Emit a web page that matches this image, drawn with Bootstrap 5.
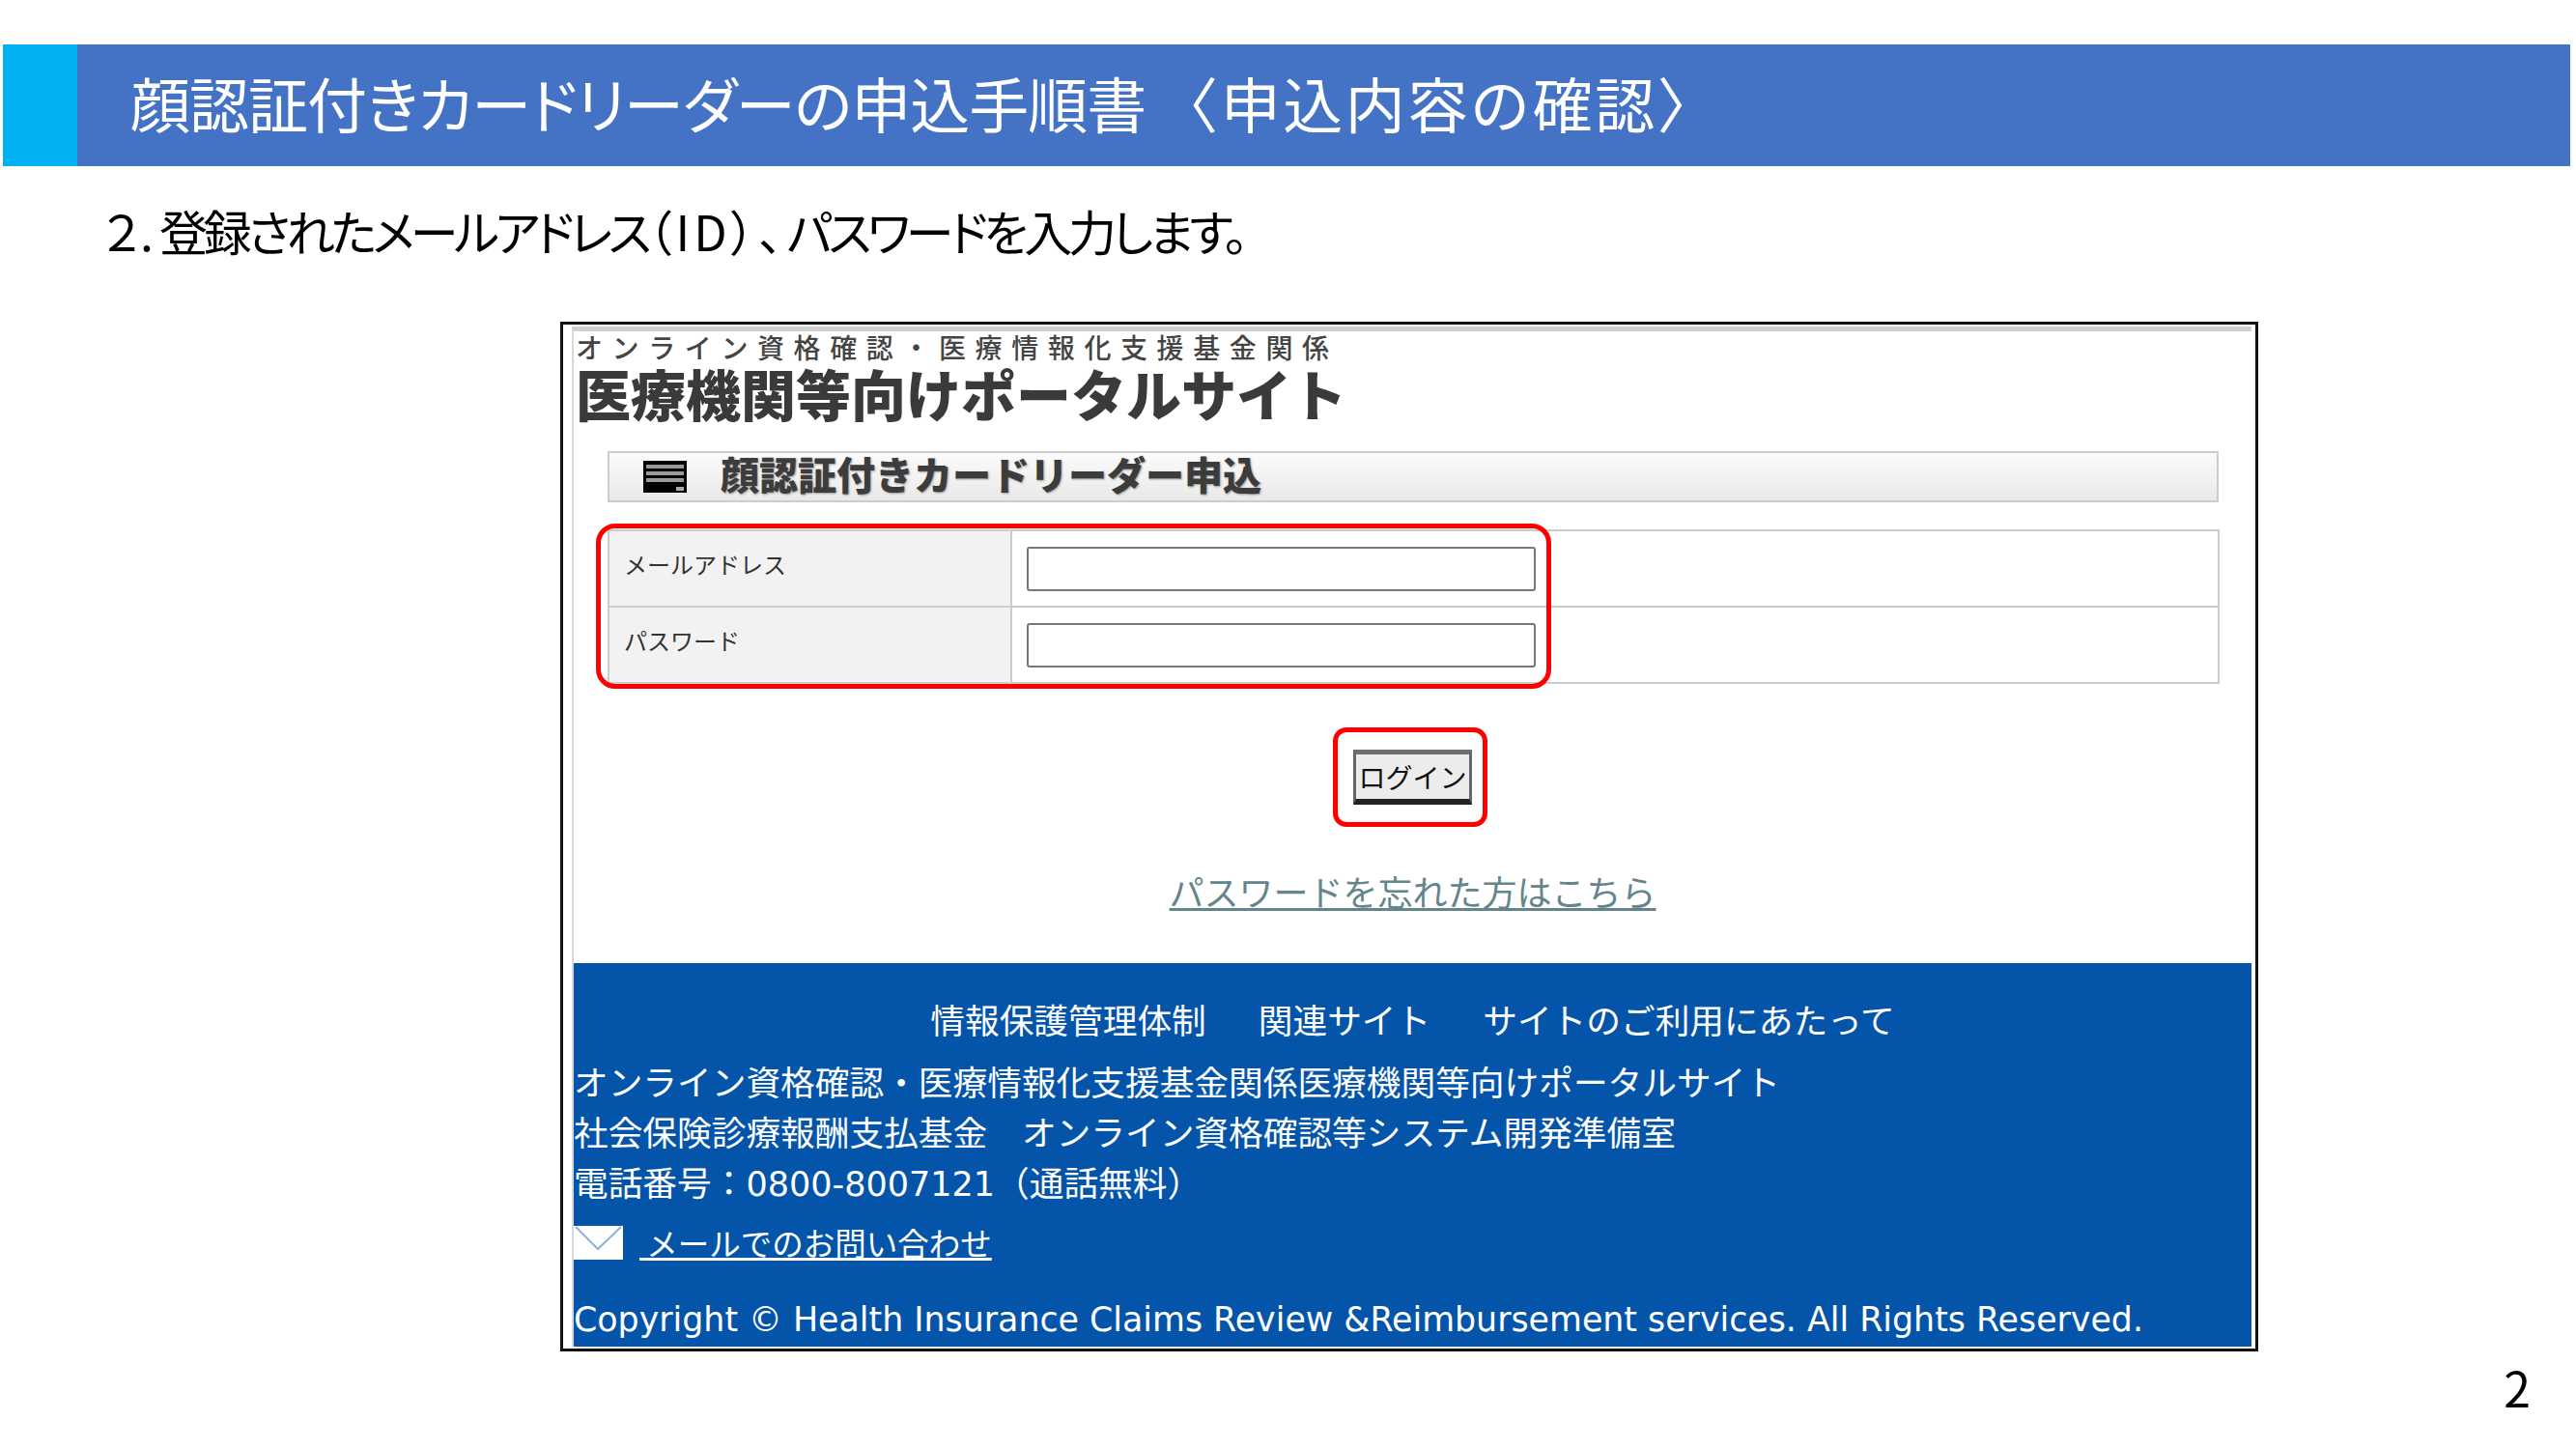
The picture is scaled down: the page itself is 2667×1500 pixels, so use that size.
<!DOCTYPE html>
<html lang="ja">
<head>
  <meta charset="UTF-8" />
  <title>顔認証付きカードリーダーの申込手順書</title>
  <link href="https://cdn.jsdelivr.net/npm/bootstrap@5.3.0/dist/css/bootstrap.min.css" rel="stylesheet">
  <style>
    html, body { height: 100%; }
    body {
      width: 2667px;
      height: 1500px;
      overflow: hidden;
      background: #fff;
      color: #000;
      font-family: "Noto Sans CJK JP", "Noto Sans", sans-serif;
    }
    /* slide header */
    .slide-bar {
      height: 126px;
      margin: 46px 6px 0 3px;
      background: #4472c4;
      color: #fff;
    }
    .slide-accent { width: 77px; background: #00b0f0; }
    .slide-title {
      padding-left: 55px;
      font-size: 62px;
      font-weight: 400;
      line-height: 120px;
      letter-spacing: -1px;
      white-space: pre;
      font-feature-settings: "palt";
    }
    .slide-title-sub { font-feature-settings: normal; letter-spacing: 2.6px; }
    .step-text {
      margin: 41px 0 0 107px;
      height: 50px;
      font-size: 50px;
      font-weight: 400;
      line-height: 50px;
      letter-spacing: -4.3px;
      white-space: pre;
      font-feature-settings: "palt";
    }
    .step-no { letter-spacing: 0; margin-right: 6px; }
    .step-id { letter-spacing: 4px; }
    /* captured portal screen */
    .portal-frame {
      width: 1758px;
      height: 1066px;
      margin: 70px 0 0 580px;
      border: 3px solid #111;
      background: #fff;
      padding: 2px 4px 2px 9px;
    }
    .portal-inner {
      height: 100%;
      border-top: 5px solid #d0d0d0;
      border-left: 2px solid #d8d8d8;
    }
    .brand-sub {
      margin: 1px 0 0 2px;
      font-size: 28px;
      line-height: 30px;
      font-weight: 500;
      letter-spacing: 9.6px;
      color: #444;
      white-space: pre;
    }
    .brand-main {
      margin: 2px 0 0 2px;
      font-size: 57px;
      line-height: 60px;
      font-weight: 900;
      color: #3a3a3a;
      white-space: pre;
    }
    .apply-bar {
      height: 53px;
      margin: 31px 34px 0 35px;
      padding-left: 35px;
      gap: 35px;
      border: 2px solid #ccc;
      background: linear-gradient(#fbfbfb, #e9e9e9);
    }
    .apply-title {
      margin-top: -7px;
      font-size: 40px;
      font-weight: 900;
      color: #3c3c3c;
      text-shadow: 1px 1px 2px #999;
      line-height: 48px;
      white-space: pre;
    }
    .form-area {
      position: relative;
      margin: 28px 33px 0 35px;
    }
    .form-grid { border-collapse: collapse; width: 100%; table-layout: fixed; margin: 0; }
    .form-grid th, .form-grid td {
      height: 79px;
      padding: 0;
      border: 2px solid #ccc;
      vertical-align: middle;
    }
    .form-grid th {
      width: 417px;
      padding: 0 0 10px 15px;
      background: #f2f2f2;
      font-size: 24px;
      font-weight: 400;
      color: #333;
    }
    .form-grid td { padding-left: 15px; background: #fff; }
    .form-grid .form-control {
      width: 527px;
      height: 46px;
      border: 2px solid #777;
      border-radius: 3px;
      background: #fff;
    }
    .mark-fields {
      position: absolute;
      left: -12px;
      top: -6px;
      width: 989px;
      height: 171px;
      border: 5px solid #f00;
      border-radius: 20px;
      pointer-events: none;
    }
    .login-box {
      width: 160px;
      height: 103px;
      margin: 45px auto 0;
      border: 5px solid #f00;
      border-radius: 14px;
      transform: translateX(-3px);
    }
    .login-btn {
      width: 123px;
      height: 57px;
      padding: 0;
      border-style: solid;
      border-width: 5px 3px 6px 3px;
      border-color: #707070 #666 #222 #666;
      border-radius: 0;
      background: #ececec;
      color: #111;
      font-size: 28px;
      line-height: 36px;
      white-space: nowrap;
      transform: translateX(3px);
    }
    .forgot-link {
      margin-top: 43px;
      font-size: 36px;
      line-height: 46px;
      font-weight: 400;
    }
    .forgot-link a { color: #64858c; }
    /* blue footer */
    .portal-foot {
      flex-grow: 1;
      margin-top: 52px;
      background: #0455aa;
      color: #fff;
      font-size: 35.7px;
      font-weight: 400;
    }
    .foot-nav { padding-top: 35px; gap: 54px; height: 96px; line-height: 46px; }
    .foot-line { height: 52px; line-height: 52px; white-space: pre; }
    .foot-tel { font-family: "DejaVu Sans", sans-serif; font-size: 35px; }
    .foot-mail { margin-top: 8px; height: 58px; gap: 17px; }
    .foot-mail a { color: #fff; font-size: 32.5px; white-space: pre; line-height: 46px; }
    .mail-icon { display: block; width: 51px; height: 35px; }
    .foot-copy {
      margin-top: 26px;
      font-family: "DejaVu Sans", sans-serif;
      font-size: 34.8px;
      line-height: 50px;
      white-space: pre;
    }
    .page-no {
      margin: 11px 47px 0 0;
      font-size: 50px;
      line-height: 50px;
      font-weight: 400;
    }
  </style>
</head>
<body>

<!-- Slide title -->
<header class="slide-bar d-flex">
  <div class="slide-accent"></div>
  <div class="slide-title">顔認証付きカードリーダーの申込手順書 <span class="slide-title-sub">〈申込内容の確認〉</span></div>
</header>

<p class="step-text"><span class="step-no">２.</span>登録されたメールアドレス<span class="step-id">（ID）、</span>パスワードを入力します。</p>

<!-- Portal screen -->
<div class="portal-frame">
  <div class="portal-inner d-flex flex-column">
    <div class="brand-sub">オンライン資格確認・医療情報化支援基金関係</div>
    <div class="brand-main">医療機関等向けポータルサイト</div>

    <div class="apply-bar d-flex align-items-center">
      <svg width="45" height="33" viewBox="0 0 45 33" aria-hidden="true">
        <rect width="45" height="33" fill="#000"/>
        <rect x="3" y="4" width="39" height="4" fill="#999"/>
        <rect x="3" y="11" width="39" height="4" fill="#999"/>
        <rect x="3" y="18" width="39" height="4" fill="#999"/>
        <rect x="34" y="27" width="8" height="4" fill="#aaa"/>
      </svg>
      <div class="apply-title">顔認証付きカードリーダー申込</div>
    </div>

    <div class="form-area">
      <table class="form-grid">
        <tr>
          <th>メールアドレス</th>
          <td><input type="text" class="form-control"></td>
        </tr>
        <tr>
          <th>パスワード</th>
          <td><input type="password" class="form-control"></td>
        </tr>
      </table>
      <div class="mark-fields"></div>
    </div>

    <div class="login-box d-flex align-items-center justify-content-center">
      <button type="button" class="btn login-btn">ログイン</button>
    </div>

    <div class="forgot-link text-center"><a href="#">パスワードを忘れた方はこちら</a></div>

    <footer class="portal-foot">
      <div class="foot-nav d-flex justify-content-center">
        <span>情報保護管理体制</span>
        <span>関連サイト</span>
        <span>サイトのご利用にあたって</span>
      </div>
      <div class="foot-line">オンライン資格確認・医療情報化支援基金関係医療機関等向けポータルサイト</div>
      <div class="foot-line">社会保険診療報酬支払基金　オンライン資格確認等システム開発準備室</div>
      <div class="foot-line">電話番号：<span class="foot-tel">0800-8007121</span>（通話無料）</div>
      <div class="foot-mail d-flex align-items-center">
        <svg class="mail-icon" viewBox="0 0 51 35" aria-hidden="true">
          <rect width="51" height="35" fill="#fff"/>
          <path d="M2 1 L25 24 L49 1" fill="none" stroke="#8fb0d6" stroke-width="2"/>
        </svg>
        <a href="#"> メールでのお問い合わせ</a>
      </div>
      <div class="foot-copy">Copyright © Health Insurance Claims Review &amp;Reimbursement services. All Rights Reserved.</div>
    </footer>
  </div>
</div>

<div class="page-no text-end">2</div>

<script src="https://cdn.jsdelivr.net/npm/bootstrap@5.3.0/dist/js/bootstrap.bundle.min.js"></script>
</body>
</html>
